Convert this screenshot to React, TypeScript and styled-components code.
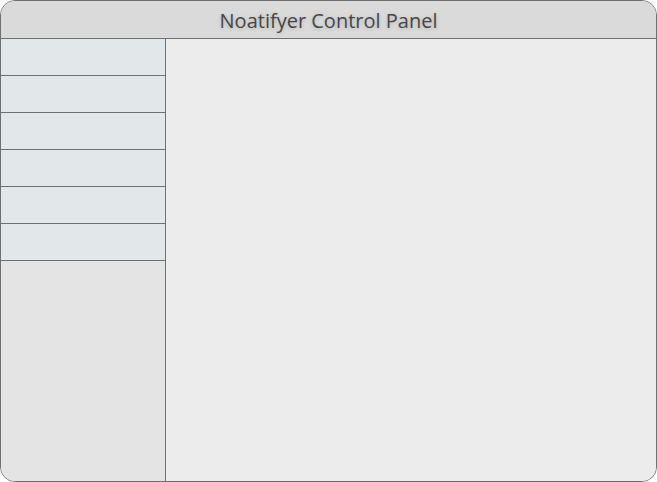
import React from "react";
import styled, { createGlobalStyle } from "styled-components";

const Global = createGlobalStyle`
  html, body { margin: 0; padding: 0; background: #ffffff; }
  * { box-sizing: border-box; }
`;

const Frame = styled.div`
  width: 657px;
  height: 482px;
  border: 1px solid #707070;
  border-radius: 15px;
  overflow: hidden;
  display: flex;
  flex-direction: column;
  background: #ececec;
`;

const Header = styled.header`
  height: 38px;
  flex: none;
  background: #dadada;
  border-bottom: 1px solid #707070;
  display: flex;
  align-items: center;
  justify-content: center;
  padding-top: 1px;
  font-family: "Open Sans", "Noto Sans", sans-serif;
  font-size: 20px;
  font-weight: 400;
  color: #464646;
  text-shadow: 0 1px 4px rgba(0, 0, 0, 0.2);
`;

const Body = styled.div`
  flex: 1;
  display: flex;
  min-height: 0;
`;

const Sidebar = styled.nav`
  width: 165px;
  flex: none;
  background: #e4e4e4;
  border-right: 1px solid #707070;
  display: flex;
  flex-direction: column;
`;

const NavItem = styled.div`
  height: 37px;
  background: #e2e7ea;
  border-bottom: 1px solid #707070;
`;

const Main = styled.main`
  flex: 1;
  background: #ececec;
`;

export default function App() {
  return (
    <>
      <Global />
      <Frame>
        <Header>Noatifyer Control Panel</Header>
        <Body>
          <Sidebar>
            {[0, 1, 2, 3, 4, 5].map((i) => (
              <NavItem key={i} />
            ))}
          </Sidebar>
          <Main />
        </Body>
      </Frame>
    </>
  );
}
